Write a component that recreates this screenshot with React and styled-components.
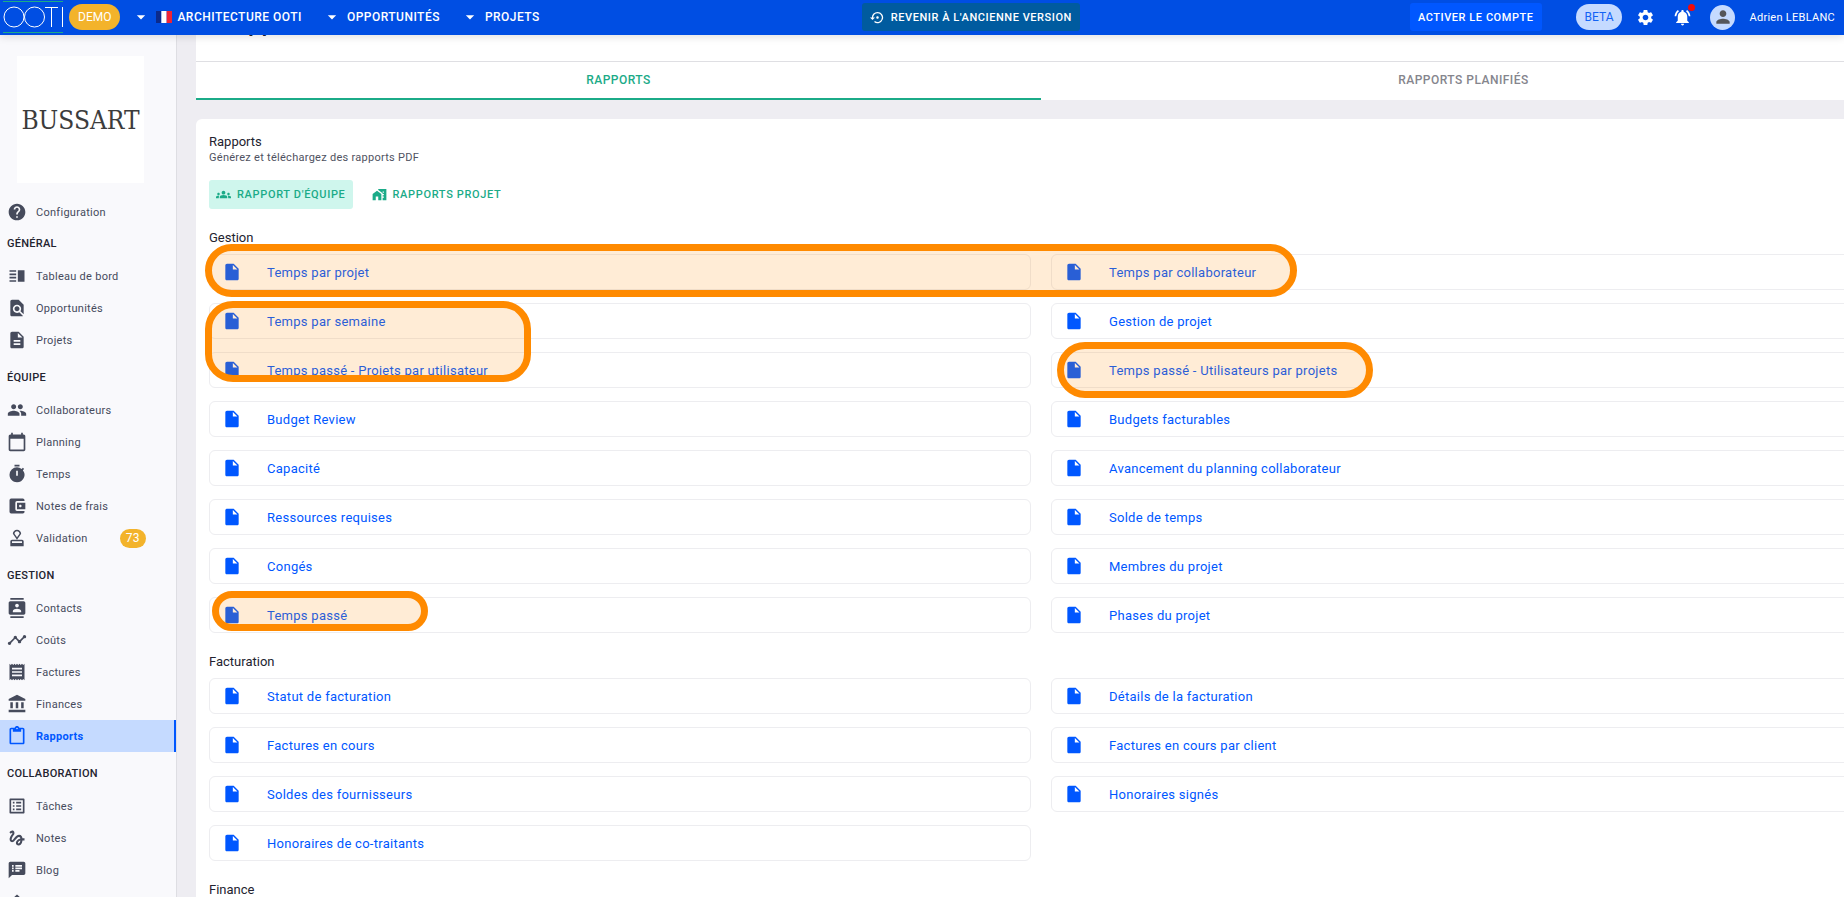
import React, { useState } from "react";
import styled, { createGlobalStyle } from "styled-components";
import {
  MdAccountBalance,
  MdAccountBalanceWallet,
  MdArrowDropDown,
  MdCalendarToday,
  MdContacts,
  MdContentPaste,
  MdDescription,
  MdFindInPage,
  MdGesture,
  MdGroups,
  MdHelp,
  MdHome,
  MdHomeWork,
  MdInsertDriveFile,
  MdListAlt,
  MdNotificationsActive,
  MdOutlineApproval,
  MdPeople,
  MdPerson,
  MdReceipt,
  MdSettings,
  MdSettingsBackupRestore,
  MdSpeakerNotes,
  MdTimeline,
  MdTimer,
  MdVerticalSplit,
} from "react-icons/md";

const GlobalStyle = createGlobalStyle`
  * {
    box-sizing: border-box;
  }

  body {
    margin: 0;
    overflow: hidden;
    background: #eeedf2;
    color: #23232f;
    font-family: Roboto, sans-serif;
    font-size: 11px;
    letter-spacing: 0.025em;
  }

  button {
    border: 0;
    background: none;
    color: inherit;
    font: inherit;
    cursor: pointer;
  }

  a {
    color: inherit;
    text-decoration: none;
  }
`;

const Page = styled.div`
  height: 100vh;
  display: flex;
  flex-direction: column;
  overflow: hidden;
`;

const TopBar = styled.header`
  position: relative;
  z-index: 2;
  flex: none;
  display: flex;
  align-items: center;
  justify-content: space-between;
  height: 35px;
  padding: 0 9px 1px 3px;
  background: #004ee3;
  color: #fff;
  box-shadow: 0 2px 8px rgba(0, 0, 0, 0.12);
`;

const Brand = styled.div`
  display: flex;
  align-items: center;
  gap: 6px;
`;

const BarGroup = styled.div`
  display: flex;
  align-items: center;
`;

const Nav = styled.nav`
  display: flex;
  align-items: center;
  gap: 20px;
  margin-left: 11px;
`;

const NavButton = styled.button`
  display: flex;
  align-items: center;
  gap: 5px;
  padding: 0;
  font-size: 12px;
  font-weight: 500;
  line-height: 16px;
  letter-spacing: 0.04em;
  text-transform: uppercase;
`;

const Chip = styled.span`
  display: flex;
  align-items: center;
  justify-content: center;
  height: 26px;
  padding: 0 9px;
  border-radius: 13px;
  font-size: 12px;
  letter-spacing: 0;
  background: ${({ $tone }) => ($tone === "beta" ? "#c5daff" : "#f3b32b")};
  color: ${({ $tone }) => ($tone === "beta" ? "#1263f5" : "#fff")};
`;

const BarButton = styled.button`
  display: flex;
  align-items: center;
  gap: 6px;
  height: 28px;
  margin-right: ${({ $muted }) => ($muted ? "8px" : "0")};
  padding: 0 8px;
  border-radius: 3px;
  background: ${({ $muted }) => ($muted ? "#005b9f" : "#0057ff")};
  font-size: 11px;
  font-weight: 500;
  letter-spacing: 0.05em;
  text-transform: uppercase;
`;

const Account = styled.div`
  display: flex;
  align-items: center;
  gap: 14px;
  margin-left: 34px;
`;

const IconButton = styled.button`
  position: relative;
  display: flex;
  padding: 0;
  margin-right: 4px;
`;

const AlertDot = styled.span`
  position: absolute;
  top: -4px;
  right: -3px;
  width: 7px;
  height: 7px;
  border-radius: 50%;
  background: #f10a0a;
`;

const Avatar = styled.span`
  display: flex;
  align-items: center;
  justify-content: center;
  width: 25px;
  height: 25px;
  border-radius: 50%;
  background: #c5daff;
  color: #55565a;
`;

const Body = styled.div`
  flex: 1;
  min-height: 0;
  display: flex;
`;

const Sidebar = styled.aside`
  flex: none;
  width: 177px;
  overflow: hidden;
  border-right: 1px solid #dedee3;
  background: #f9f9fc;
`;

const CompanyLogo = styled.div`
  display: flex;
  align-items: center;
  justify-content: center;
  width: 127px;
  height: 127px;
  margin: 21px 0 13px 17px;
  background: #fff;
  color: #3c3c3c;
  font-family: "DejaVu Serif Condensed", "DejaVu Serif", serif;
  font-size: 26px;
  letter-spacing: 0;
`;

const MenuTitle = styled.h2`
  margin: ${({ $first }) => ($first ? "0" : "6px")} 0 0;
  padding: 0 7px;
  font-size: 11px;
  font-weight: 500;
  line-height: 32px;
  text-transform: uppercase;
`;

const MenuLink = styled.a`
  display: flex;
  align-items: center;
  gap: 9px;
  height: 32px;
  padding: 0 7px;
  border-right: 2px solid ${({ $active }) => ($active ? "#0057ff" : "transparent")};
  background: ${({ $active }) => ($active ? "#c5daff" : "transparent")};
  color: ${({ $active }) => ($active ? "#0057ff" : "#464b5c")};
  font-weight: ${({ $active }) => ($active ? 700 : 400)};
`;

const Count = styled.span`
  margin-left: 23px;
  padding: 0 6px;
  border-radius: 10px;
  background: #f3b32b;
  color: #fff;
  font-size: 12px;
  line-height: 19px;
`;

// The page is scrolled a little, the title sits half under the bar
const Main = styled.main`
  flex: 1;
  min-width: 0;
  margin: -34px -42px 0 19px;
`;

const PageHeader = styled.div`
  background: #fff;
`;

const PageTitle = styled.h1`
  margin: 0;
  padding: 7px 24px 23px;
  border-bottom: 1px solid #dfdfe3;
  font-size: 24px;
  font-weight: 500;
  line-height: 30px;
  letter-spacing: 0;
`;

const Tabs = styled.div`
  display: grid;
  grid-template-columns: 1fr 1fr;
`;

const Tab = styled.button`
  height: 38px;
  padding: 0;
  border-bottom: 2px solid ${({ $active }) => ($active ? "#1bab88" : "transparent")};
  color: ${({ $active }) => ($active ? "#1bab88" : "#85858d")};
  font-size: 12px;
  font-weight: 500;
  letter-spacing: 0.04em;
  text-transform: uppercase;
`;

const Card = styled.div`
  margin-top: 19px;
  padding: 15px 13px;
  border-radius: 6px;
  background: #fff;
`;

const CardTitle = styled.h2`
  margin: 0;
  font-size: 13px;
  font-weight: 400;
  line-height: 16px;
  letter-spacing: 0;
`;

const CardHint = styled.p`
  margin: 0 0 14px;
  color: #4f5261;
  line-height: 16px;
`;

const Filters = styled.div`
  display: flex;
  gap: 12px;
  margin-bottom: 20px;
`;

const FilterButton = styled.button`
  display: flex;
  align-items: center;
  gap: 6px;
  height: 29px;
  padding: 0 7px;
  border-radius: 3px;
  background: ${({ $active }) => ($active ? "#cff6ed" : "transparent")};
  color: #1bab88;
  font-size: 11px;
  font-weight: 500;
  letter-spacing: 0.06em;
  text-transform: uppercase;
`;

const Section = styled.section`
  position: relative;
  margin-bottom: 20px;
`;

const SectionTitle = styled.h3`
  margin: 0 0 7px;
  font-size: 13px;
  font-weight: 400;
  line-height: 18px;
  letter-spacing: 0;
`;

const ReportGrid = styled.div`
  display: grid;
  grid-template-columns: 1fr 1fr;
  gap: 13px 20px;
`;

const ReportLink = styled.a`
  display: flex;
  align-items: center;
  gap: 25px;
  height: 36px;
  padding: 0 12px;
  border: 1px solid #ededf0;
  border-radius: 6px;
  color: #0057ff;
  font-size: 13px;
`;

const Marker = styled.div`
  position: absolute;
  top: ${({ $top }) => $top}px;
  left: ${({ $left }) => $left}px;
  width: ${({ $width }) => $width}px;
  height: ${({ $height }) => $height}px;
  border: 7px solid #ff8a00;
  border-radius: 28px;
  background: rgba(255, 138, 0, 0.16);
  pointer-events: none;
`;

const menu = [
  { items: [{ label: "Configuration", icon: MdHelp }] },
  {
    title: "Général",
    items: [
      { label: "Tableau de bord", icon: MdVerticalSplit },
      { label: "Opportunités", icon: MdFindInPage },
      { label: "Projets", icon: MdDescription },
    ],
  },
  {
    title: "Équipe",
    items: [
      { label: "Collaborateurs", icon: MdPeople },
      { label: "Planning", icon: MdCalendarToday },
      { label: "Temps", icon: MdTimer },
      { label: "Notes de frais", icon: MdAccountBalanceWallet },
      { label: "Validation", icon: MdOutlineApproval, count: 73 },
    ],
  },
  {
    title: "Gestion",
    items: [
      { label: "Contacts", icon: MdContacts },
      { label: "Coûts", icon: MdTimeline },
      { label: "Factures", icon: MdReceipt },
      { label: "Finances", icon: MdAccountBalance },
      { label: "Rapports", icon: MdContentPaste, active: true },
    ],
  },
  {
    title: "Collaboration",
    items: [
      { label: "Tâches", icon: MdListAlt },
      { label: "Notes", icon: MdGesture },
      { label: "Blog", icon: MdSpeakerNotes },
      { label: "", icon: MdHome },
    ],
  },
];

const sections = [
  {
    title: "Gestion",
    reports: [
      "Temps par projet",
      "Temps par collaborateur",
      "Temps par semaine",
      "Gestion de projet",
      "Temps passé - Projets par utilisateur",
      "Temps passé - Utilisateurs par projets",
      "Budget Review",
      "Budgets facturables",
      "Capacité",
      "Avancement du planning collaborateur",
      "Ressources requises",
      "Solde de temps",
      "Congés",
      "Membres du projet",
      "Temps passé",
      "Phases du projet",
    ],
    markers: [
      { top: 15, left: -4, width: 1092, height: 53 },
      { top: 72, left: -4, width: 326, height: 81 },
      { top: 113, left: 848, width: 316, height: 56 },
      { top: 362, left: 3, width: 216, height: 40 },
    ],
  },
  {
    title: "Facturation",
    reports: [
      "Statut de facturation",
      "Détails de la facturation",
      "Factures en cours",
      "Factures en cours par client",
      "Soldes des fournisseurs",
      "Honoraires signés",
      "Honoraires de co-traitants",
    ],
  },
  { title: "Finance", reports: [] },
];

const OotiLogo = () => (
  <svg width="60" height="32" viewBox="0 0 60 32" fill="none" stroke="#fff" role="img" aria-label="OOTI">
    <path d="M0 .5h60M0 31.5h60" stroke="#1bab88" />
    <circle cx="11" cy="16" r="10" />
    <circle cx="31.500" cy="16" r="10" />
    <path d="M42 6.500h13M48.500 6.500v19.500M59.500 6v20" />
  </svg>
);

const FrenchFlag = () => (
  <svg width="16" height="12" viewBox="0 0 15 12" preserveAspectRatio="none" aria-hidden="true">
    <path fill="#0b2a8c" d="M0 0h5v12H0z" />
    <path fill="#fff" d="M5 0h5v12H5z" />
    <path fill="#ee2436" d="M10 0h5v12h-5z" />
  </svg>
);

const App = () => {
  const [tab, setTab] = useState("reports");
  const [filter, setFilter] = useState("team");

  return (
    <>
      <GlobalStyle />
      <Page>
        <TopBar>
          <BarGroup>
            <Brand>
              <OotiLogo />
              <Chip>DEMO</Chip>
            </Brand>
            <Nav>
              <NavButton><MdArrowDropDown size={20} /><FrenchFlag />Architecture OOTI</NavButton>
              <NavButton><MdArrowDropDown size={20} />Opportunités</NavButton>
              <NavButton><MdArrowDropDown size={20} />Projets</NavButton>
            </Nav>
          </BarGroup>
          <BarButton $muted><MdSettingsBackupRestore size={15} />Revenir à l'ancienne version</BarButton>
          <BarGroup>
            <BarButton>Activer le compte</BarButton>
            <Account>
              <Chip $tone="beta">BETA</Chip>
              <IconButton aria-label="Paramètres"><MdSettings size={19} /></IconButton>
              <IconButton aria-label="Notifications">
                <MdNotificationsActive size={19} />
                <AlertDot />
              </IconButton>
              <Avatar><MdPerson size={20} /></Avatar>
              <span>Adrien LEBLANC</span>
            </Account>
          </BarGroup>
        </TopBar>

        <Body>
          <Sidebar>
            <CompanyLogo>BUSSART</CompanyLogo>
            {menu.map(({ title, items }, index) => (
              <nav key={index}>
                {title && <MenuTitle $first={index === 1}>{title}</MenuTitle>}
                {items.map(({ label, icon: Icon, active, count }) => (
                  <MenuLink key={label} href="#" $active={active}>
                    <Icon size={20} />
                    {label}
                    {count && <Count>{count}</Count>}
                  </MenuLink>
                ))}
              </nav>
            ))}
          </Sidebar>

          <Main>
            <PageHeader>
              <PageTitle>Rapports</PageTitle>
              <Tabs>
                <Tab $active={tab === "reports"} onClick={() => setTab("reports")}>Rapports</Tab>
                <Tab $active={tab === "planned"} onClick={() => setTab("planned")}>Rapports planifiés</Tab>
              </Tabs>
            </PageHeader>

            <Card>
              <CardTitle>Rapports</CardTitle>
              <CardHint>Générez et téléchargez des rapports PDF</CardHint>
              <Filters>
                <FilterButton $active={filter === "team"} onClick={() => setFilter("team")}>
                  <MdGroups size={15} />Rapport d'équipe
                </FilterButton>
                <FilterButton $active={filter === "project"} onClick={() => setFilter("project")}>
                  <MdHomeWork size={15} />Rapports projet
                </FilterButton>
              </Filters>

              {sections.map(({ title, reports, markers = [] }) => (
                <Section key={title}>
                  <SectionTitle>{title}</SectionTitle>
                  <ReportGrid>
                    {reports.map((report) => (
                      <ReportLink key={report} href="#">
                        <MdInsertDriveFile size={20} />
                        {report}
                      </ReportLink>
                    ))}
                  </ReportGrid>
                  {markers.map(({ top, left, width, height }) => (
                    <Marker key={top} $top={top} $left={left} $width={width} $height={height} />
                  ))}
                </Section>
              ))}
            </Card>
          </Main>
        </Body>
      </Page>
    </>
  );
};

export default App;
